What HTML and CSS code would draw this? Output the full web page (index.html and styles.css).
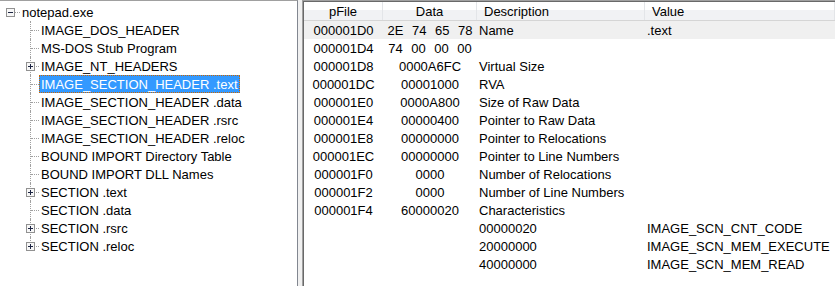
FILE: index.html
```html
<!DOCTYPE html>
<html lang="en">
<head>
    <meta charset="UTF-8">
    <title>notepad.exe - PE Viewer</title>
    <link rel="stylesheet" href="styles.css">
</head>
<body>
<div class="app">
    <div class="tree-pane">
        <div class="node root">
            <span class="toggle"><svg width="9" height="9" viewBox="0 0 9 9"><rect x="0.5" y="0.5" width="8" height="8" fill="#f7f7f7" stroke="#919191"/><path d="M2 4.5h5" stroke="#1c2442"/></svg></span>
            <span class="stub short"></span>
            <span class="label">notepad.exe</span>
        </div>
        <div class="children">
            <div class="node"><span class="branch"><span class="stub"></span></span><span class="label">IMAGE_DOS_HEADER</span></div>
            <div class="node"><span class="branch"><span class="stub"></span></span><span class="label">MS-DOS Stub Program</span></div>
            <div class="node"><span class="branch"><span class="stub"></span><span class="toggle small"><svg width="9" height="9" viewBox="0 0 9 9"><rect x="0.5" y="0.5" width="8" height="8" fill="#f7f7f7" stroke="#919191"/><path d="M2 4.5h5M4.5 2v5" stroke="#1c2442"/></svg></span></span><span class="label">IMAGE_NT_HEADERS</span></div>
            <div class="node"><span class="branch"><span class="stub"></span></span><span class="label selected">IMAGE_SECTION_HEADER .text</span></div>
            <div class="node"><span class="branch"><span class="stub"></span></span><span class="label">IMAGE_SECTION_HEADER .data</span></div>
            <div class="node"><span class="branch"><span class="stub"></span></span><span class="label">IMAGE_SECTION_HEADER .rsrc</span></div>
            <div class="node"><span class="branch"><span class="stub"></span></span><span class="label">IMAGE_SECTION_HEADER .reloc</span></div>
            <div class="node"><span class="branch"><span class="stub"></span></span><span class="label">BOUND IMPORT Directory Table</span></div>
            <div class="node"><span class="branch"><span class="stub"></span></span><span class="label">BOUND IMPORT DLL Names</span></div>
            <div class="node"><span class="branch"><span class="stub"></span><span class="toggle small"><svg width="9" height="9" viewBox="0 0 9 9"><rect x="0.5" y="0.5" width="8" height="8" fill="#f7f7f7" stroke="#919191"/><path d="M2 4.5h5M4.5 2v5" stroke="#1c2442"/></svg></span></span><span class="label">SECTION .text</span></div>
            <div class="node"><span class="branch"><span class="stub"></span></span><span class="label">SECTION .data</span></div>
            <div class="node"><span class="branch"><span class="stub"></span><span class="toggle small"><svg width="9" height="9" viewBox="0 0 9 9"><rect x="0.5" y="0.5" width="8" height="8" fill="#f7f7f7" stroke="#919191"/><path d="M2 4.5h5M4.5 2v5" stroke="#1c2442"/></svg></span></span><span class="label">SECTION .rsrc</span></div>
            <div class="node last"><span class="branch"><span class="stub"></span><span class="toggle small"><svg width="9" height="9" viewBox="0 0 9 9"><rect x="0.5" y="0.5" width="8" height="8" fill="#f7f7f7" stroke="#919191"/><path d="M2 4.5h5M4.5 2v5" stroke="#1c2442"/></svg></span></span><span class="label">SECTION .reloc</span></div>
        </div>
    </div>

    <div class="splitter"></div>

    <div class="list-pane">
        <div class="list-inner">
            <div class="list-header">
                <div class="col-head center">pFile</div>
                <div class="col-head center">Data</div>
                <div class="col-head">Description</div>
                <div class="col-head">Value</div>
            </div>
            <div class="list-row hot"><div class="center">000001D0</div><div class="center bytes">2E 74 65 78</div><div class="cell">Name</div><div class="cell">.text</div></div>
            <div class="list-row"><div class="center">000001D4</div><div class="center bytes">74 00 00 00</div><div class="cell"></div><div class="cell"></div></div>
            <div class="list-row"><div class="center">000001D8</div><div class="center">0000A6FC</div><div class="cell">Virtual Size</div><div class="cell"></div></div>
            <div class="list-row"><div class="center">000001DC</div><div class="center">00001000</div><div class="cell">RVA</div><div class="cell"></div></div>
            <div class="list-row"><div class="center">000001E0</div><div class="center">0000A800</div><div class="cell">Size of Raw Data</div><div class="cell"></div></div>
            <div class="list-row"><div class="center">000001E4</div><div class="center">00000400</div><div class="cell">Pointer to Raw Data</div><div class="cell"></div></div>
            <div class="list-row"><div class="center">000001E8</div><div class="center">00000000</div><div class="cell">Pointer to Relocations</div><div class="cell"></div></div>
            <div class="list-row"><div class="center">000001EC</div><div class="center">00000000</div><div class="cell">Pointer to Line Numbers</div><div class="cell"></div></div>
            <div class="list-row"><div class="center">000001F0</div><div class="center">0000</div><div class="cell">Number of Relocations</div><div class="cell"></div></div>
            <div class="list-row"><div class="center">000001F2</div><div class="center">0000</div><div class="cell">Number of Line Numbers</div><div class="cell"></div></div>
            <div class="list-row"><div class="center">000001F4</div><div class="center">60000020</div><div class="cell">Characteristics</div><div class="cell"></div></div>
            <div class="list-row"><div></div><div></div><div class="cell">00000020</div><div class="cell">IMAGE_SCN_CNT_CODE</div></div>
            <div class="list-row"><div></div><div></div><div class="cell">20000000</div><div class="cell">IMAGE_SCN_MEM_EXECUTE</div></div>
            <div class="list-row"><div></div><div></div><div class="cell">40000000</div><div class="cell">IMAGE_SCN_MEM_READ</div></div>
        </div>
    </div>
</div>
</body>
</html>
```

FILE: styles.css
```css
html, body {
    margin: 0;
    padding: 0;
    background-color: #fff;
}
body {
    font-family: "Liberation Sans", Arial, sans-serif;
    font-size: 13px;
    color: #000;
}
.app {
    display: flex;
    height: 286px;
    overflow: hidden;
}

/* tree */
.tree-pane {
    width: 297px;
    flex: none;
    background-color: #fff;
    border-top: 1px solid #a0a0a0;
    border-right: 1px solid #828790;
    padding-top: 2px;
}
.node {
    display: flex;
    align-items: center;
    height: 18px;
}
.root .toggle {
    margin-left: 6px;
}
.toggle {
    display: block;
    width: 9px;
    height: 9px;
}
.toggle svg {
    display: block;
}
.stub {
    display: block;
    width: 8px;
    height: 0;
    border-top: 1px dotted #a0a0a0;
}
.stub.short {
    width: 5px;
}
.branch {
    position: relative;
    display: flex;
    align-items: center;
    align-self: stretch;
    margin-left: 30px;
    border-left: 1px dotted #a0a0a0;
}
.node.last .branch {
    align-self: flex-start;
    align-items: flex-end;
    height: 10px;
}
.toggle.small {
    position: absolute;
    left: -5px;
    top: 5px;
}
.label {
    box-sizing: border-box;
    height: 18px;
    line-height: 18px;
    padding: 0 1px;
    border: 1px solid transparent;
    white-space: nowrap;
    overflow: hidden;
}
.label.selected {
    background-color: #3399ff;
    color: #fff;
    border: 1px dotted #cc6600;
}

.splitter {
    width: 4px;
    flex: none;
    background-color: #f0f0f0;
}

/* list */
.list-pane {
    flex: 1;
    border-top: 1px solid #a0a0a0;
    border-left: 1px solid #a0a0a0;
}
.list-inner {
    height: 100%;
    border-top: 1px solid #696969;
    border-left: 1px solid #696969;
}
.list-header, .list-row {
    display: grid;
    grid-template-columns: 79px 94px 168px 1fr;
}
.list-header {
    height: 18px;
    border-bottom: 1px solid #d5d5d5;
    background: linear-gradient(#ffffff 0, #ffffff 8px, #f1f2f4 8px, #f1f2f4 100%);
}
.col-head {
    line-height: 20px;
    padding-left: 7px;
    border-right: 1px solid #e3e5e8;
    white-space: nowrap;
    overflow: hidden;
}
.col-head.center {
    padding-left: 0;
    text-align: center;
}
.list-row {
    height: 18px;
    line-height: 20px;
    white-space: nowrap;
    overflow: hidden;
}
.list-row.hot {
    background-color: #f0f0f0;
}
.center {
    text-align: center;
}
.cell {
    padding-left: 2px;
}
.bytes {
    word-spacing: 5px;
}
```
